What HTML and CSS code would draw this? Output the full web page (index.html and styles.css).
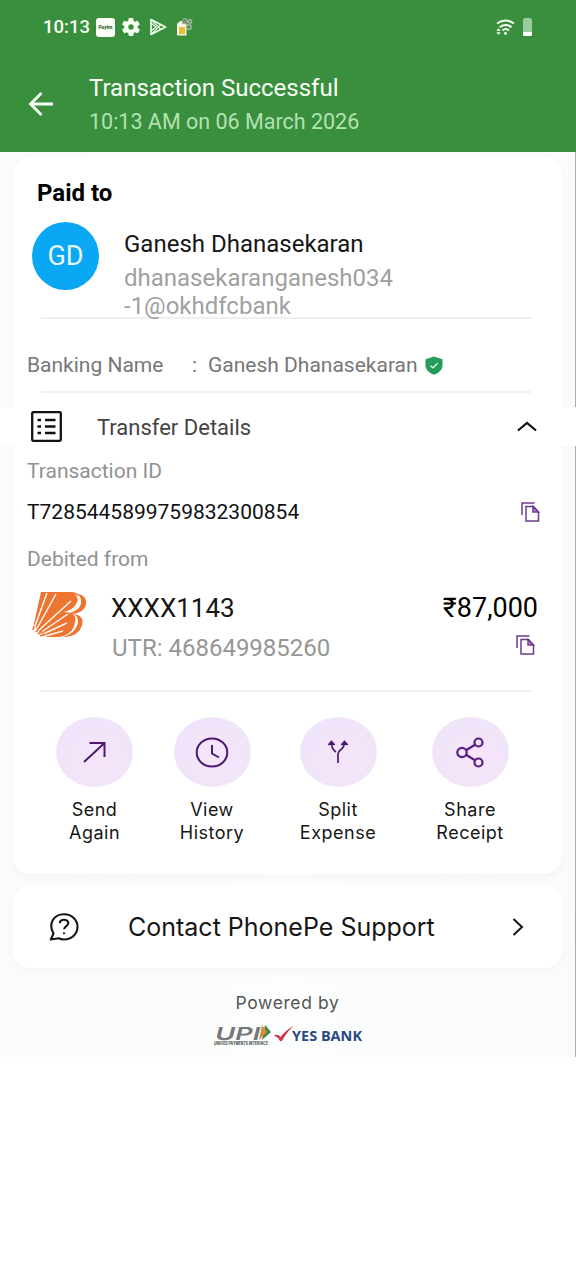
FILE: index.html
```html
<!DOCTYPE html>
<html lang="en">
<head>
<meta charset="utf-8">
<title>Transaction Successful</title>
<link rel="stylesheet" href="styles.css">
</head>
<body>
<header class="header">
  <div class="status">
    <span class="clock">10:13</span>
    <svg class="st-app" width="19" height="19" viewBox="0 0 19 19"><rect width="19" height="19" rx="3" fill="#fbfff8"/><text x="2.5" y="11.4" font-size="5.5" font-weight="900" textLength="14" lengthAdjust="spacingAndGlyphs" fill="#3f6b43">Paytm</text></svg>
    <svg class="st-gear" width="18" height="18" viewBox="2 2 20 20"><path fill="#f6fff2" fill-rule="evenodd" d="M19.4 13c0-.3.1-.6.1-1s0-.7-.1-1l2.1-1.600c.2-.1.2-.4.1-.6l-2-3.500c-.1-.2-.4-.3-.6-.2l-2.500 1c-.5-.4-1.100-.7-1.700-1l-.4-2.600c0-.2-.2-.4-.5-.4h-4c-.2 0-.4.2-.5.4l-.4 2.600c-.6.300-1.200.6-1.700 1l-2.500-1c-.2-.1-.5 0-.6.2l-2 3.500c-.1.2-.1.5.1.6L4.500 11c0 .3-.1.600-.1 1s0 .700.100 1l-2.100 1.600c-.2.200-.2.400-.1.600l2 3.500c.1.200.4.300.6.200l2.500-1c.5.400 1.100.700 1.700 1l.4 2.600c0 .200.200.400.500.400h4c.2 0 .400-.2.500-.4l.4-2.600c.6-.3 1.200-.6 1.700-1l2.500 1c.2.100.5 0 .6-.2l2-3.500c.1-.2.100-.4-.1-.6zM12 15a3 3 0 1 1 0-6 3 3 0 0 1 0 6z"/></svg>
    <svg class="st-play" width="18" height="18" viewBox="0 0 18 18" fill="none" stroke="#efffe9" stroke-width="1.600" stroke-linejoin="round"><path d="M2 1.500v15L16.500 9z"/><path d="M2 1.500l9.800 9.800M2 16.500l9.800-9.800M2 5l5 4-5 4" stroke-width="1.200"/></svg>
    <svg class="st-bag" width="17" height="18" viewBox="0 0 17 18"><path d="M1 17.500V6l3-3h4l2.500 3v11.500z" fill="#f4f3e4"/><path d="M3 9h6v7H3z" fill="#e5bf35"/><g fill="none" stroke="#a8b7a2" stroke-width="1.500"><circle cx="9" cy="3.200" r="2.200"/><circle cx="14" cy="3.500" r="1.700"/><circle cx="12.800" cy="9" r="2.300"/></g><path d="M6 1.500h5v4H6z" fill="#768c77" opacity=".75"/></svg>
    <svg class="st-wifi" width="19" height="17" viewBox="0 0 19 17" fill="none" stroke="#f4fff0" stroke-width="2"><path d="M1 4.500Q9.500-1.500 18 4.500M3.800 8.200Q9.700 3.800 15.500 8.200M6.500 11.500Q9.800 8.500 13 11.500"/><circle cx="9.500" cy="14.300" r="1.500" fill="#f4fff0" stroke="none"/><path d="M.4 12L2.500 9l2.100 3zM.4 13.200h4.200L2.500 16z" fill="#f4fff0" stroke="none"/></svg>
    <svg class="st-batt" width="9" height="18" viewBox="0 0 9 18"><rect width="9" height="18" rx="2.500" fill="#9ccb9d"/><path d="M0 14h9v2.500q0 1.500-1.500 1.500h-6Q0 18 0 16.500z" fill="#fff"/></svg>
  </div>
  <div class="titlebar">
    <svg class="back" width="26" height="26" viewBox="0 0 26 26" fill="none" stroke="#f8fff4" stroke-width="2.800"><path d="M25 13H3M13.500 2L2.500 13l11 11"/></svg>
    <div>
      <h1 class="title">Transaction Successful</h1>
      <p class="date">10:13 AM on 06 March 2026</p>
    </div>
  </div>
</header>

<main class="page">
  <section class="card">
    <h2 class="paid">Paid to</h2>
    <div class="recipient">
      <div class="avatar">GD</div>
      <div>
        <div class="name">Ganesh Dhanasekaran</div>
        <div class="upi">dhanasekaranganesh034<br>-1@okhdfcbank</div>
      </div>
    </div>
    <hr class="rule rule-a">
    <div class="banking">
      <span class="bk-label">Banking Name</span><span class="bk-colon">:</span><span class="bk-name">Ganesh Dhanasekaran</span>
      <svg width="18" height="19" viewBox="0 0 18 19"><path d="M9 .5l8.500 2.800v6c0 4.700-3.600 7.800-8.500 9.400C4.100 17.100.5 14 .5 9.300v-6z" fill="#239c5c"/><path d="M5.500 9.800l2.400 2 4.800-4.600" fill="none" stroke="#e4f8ec" stroke-width="1.300"/></svg>
    </div>
    <hr class="rule rule-b">
    <div class="transfer">
      <svg width="31" height="31" viewBox="0 0 31 31"><rect x="1.200" y="1.200" width="28.600" height="28.600" rx="1" fill="none" stroke="#111" stroke-width="2.300"/><path d="M6.500 9h3.500M14 9h10.500M6.500 15.500h3.500M14 15.500h10.500M6.500 22h3.500M14 22h10.500" stroke="#111" stroke-width="2.500"/></svg>
      <span class="tr-label">Transfer Details</span>
      <svg width="20" height="11" viewBox="0 0 20 11" fill="none" stroke="#111" stroke-width="2.200"><path d="M1 9.500L10 2l9 7.500"/></svg>
    </div>
    <div class="label">Transaction ID</div>
    <div class="txn">
      <span>T7285445899759832300854</span>
      <svg width="19" height="20" viewBox="0 0 19 20" fill="none" stroke="#6d3b8e" stroke-width="1.500"><path d="M1 13V1h12.500"/><path d="M5 4.500h7.500l5 5.500v9H5z"/><path d="M12 4.500V10h5.500z" fill="#b58fcb"/></svg>
    </div>
    <div class="label">Debited from</div>
    <div class="account">
      <svg class="bob" width="56" height="48" viewBox="0 0 56 48">
        <path d="M9 1h30c9 0 10 8 5 13-3 4-7 6-12 7 10-1 14 3 12 10-2 10-10 15-19 15H8C4 46 0 42 1 37z" fill="#ee7431"/>
        <path d="M42 2c8 1 13 4 12 11-1 6-6 9-13 10 8 1 11 5 9 11-2 8-9 12-19 12 9-3 14-9 14-16 0-5-3-7-9-8 8-2 13-6 13-12 0-4-2-7-7-8z" fill="#ee7431"/>
        <path d="M41 3c5 2 6 6 3 10-3 5-7 7-12 8 9 0 13 4 11 10-1 7-5 12-12 14 9-1 15-8 15-15 0-5-4-8-9-8 8-2 12-6 12-11 0-4-3-7-8-8z" fill="#fffaf4"/>
        <path d="M2 38L15 2M4 39L24 3M6 40L39 10M8 42L36 23M9 44L35 32M10 46L31 40M0 32v16h10z" stroke="#fff8ef" stroke-width="1.500" fill="none"/>
        <path d="M0 36l7 4 4 6-2 2H0z" fill="#fff"/>
        <path d="M1 39l1-4M4 41l3-4M6 43l4-3M8 45l5-2" stroke="#ee7431" stroke-width="1.600"/>
      </svg>
      <div class="acc-main">
        <div class="acc-line"><span class="acc-no">XXXX1143</span><span class="amount">₹87,000</span></div>
        <div class="acc-line"><span class="utr">UTR: 468649985260</span>
          <svg class="copy2" width="19" height="20" viewBox="0 0 19 20" fill="none" stroke="#6d3b8e" stroke-width="1.500"><path d="M1 13V1h12.500"/><path d="M5 4.500h7.500l5 5.500v9H5z"/><path d="M12 4.500V10h5.500z" fill="#b58fcb"/></svg>
        </div>
      </div>
    </div>
    <hr class="rule rule-c">
    <div class="actions">
      <div class="action"><span class="disc"><svg width="26" height="24" viewBox="0 0 26 24" fill="none" stroke="#4c1a72" stroke-width="2"><path d="M2 22L22.500 3M7.500 3h15v14"/></svg></span>Send<br>Again</div>
      <div class="action"><span class="disc"><svg width="34" height="31" viewBox="0 0 34 31" fill="none" stroke="#4c1a72" stroke-width="2"><ellipse cx="17" cy="15.500" rx="15.300" ry="14"/><path d="M17 8v8.500l7 4"/></svg></span>View<br>History</div>
      <div class="action"><span class="disc"><svg width="22" height="24" viewBox="0 0 22 24" fill="none" stroke="#4c1a72" stroke-width="1.700"><path d="M11 23v-9c0-2 1-3 3-4.500 2.500-2 3.500-3.500 3.500-7.500M4.500 3c0 4 1 6.500 4.500 9"/><path d="M14.300 5l3.200-3.500L20.700 5M1.300 5l3.200-3.500L7.700 5" fill="#4c1a72"/></svg></span>Split<br>Expense</div>
      <div class="action"><span class="disc"><svg width="28" height="31" viewBox="0 0 28 31" fill="none" stroke="#5a1d80" stroke-width="2.200"><circle cx="6" cy="15.500" r="4.700"/><circle cx="22.500" cy="5.500" r="4"/><circle cx="22.500" cy="25.500" r="4"/><path d="M10 13.300l9-5.500M10 17.700l9 5.500"/></svg></span>Share<br>Receipt</div>
    </div>
  </section>

  <section class="support">
    <svg width="30" height="28" viewBox="0 0 30 28" fill="none" stroke="#161616" stroke-width="2.100" stroke-linejoin="round"><path d="M4.500 20.500C-1 11 4.500 1.300 15 1.300c8 0 13.500 5.500 13.500 12.500S23 26.500 15 26.500c-2.500 0-4-.5-5.500-1.200L1.800 26.500z"/><path d="M10.800 10.200C10.500 5.600 19.500 5.600 19.300 10.200c-.1 2.800-4 3-4.200 6"/><circle cx="15" cy="20.300" r=".7" fill="#161616" stroke-width="1"/></svg>
    <span class="sup-text">Contact PhonePe Support</span>
    <svg width="12" height="18" viewBox="0 0 12 18" fill="none" stroke="#161616" stroke-width="2"><path d="M1.500 1L10 9l-8.500 8"/></svg>
  </section>

  <footer class="footer">
    <div class="powered">Powered by</div>
    <svg width="150" height="22" viewBox="0 0 150 22">
      <g class="upi-mark" transform="translate(1 15.500) skewX(-14)"><text x="0" y="0" font-size="18" font-weight="600" textLength="45" lengthAdjust="spacingAndGlyphs" fill="#77787b">UPI</text></g>
      <path d="M52 1l6 7-9 8z" fill="#3e8750"/><path d="M49 1l5 7-8 8z" fill="#df8b36"/>
      <text class="upi-tag" x="1" y="20.500" font-size="4.300" font-weight="700" textLength="54" lengthAdjust="spacingAndGlyphs" fill="#444">UNIFIED PAYMENTS INTERFACE</text>
      <path d="M61 11.500q4-2 6.500 1.500Q73 6 80.500 2 73 9 69 17h-2q-2-4-6-5.500z" fill="#cf3350"/>
      <text class="yes" x="79" y="17" font-size="14" font-weight="700" textLength="70" lengthAdjust="spacingAndGlyphs" fill="#2b4784">YES BANK</text>
    </svg>
  </footer>
</main>
</body>
</html>
```
FILE: styles.css
```css
* { box-sizing: border-box; }
body { margin: 0; width: 576px; min-height: 1280px; background: #fff; font-family: Roboto, "Liberation Sans", sans-serif; color: #161616; }
h1, h2, p, hr { margin: 0; border: 0; font-weight: 400; }
svg { display: block; flex: none; }
span, .title, .date, .name, .upi { white-space: nowrap; }

.header { height: 152px; background: #398f3e; color: #f8fff4; display: flex; flex-direction: column; }
.status { height: 54px; padding-left: 43px; display: flex; align-items: center; }
.clock { width: 53px; font-size: 18.5px; font-weight: 500; }
.st-gear { margin-left: 7px; }
.st-play { margin-left: 9px; }
.st-bag { margin-left: 9px; }
.st-wifi { margin-left: 303px; }
.st-batt { margin-left: 8px; }
.titlebar { display: flex; padding: 17px 0 0 28px; }
.back { margin: 20px 35px 0 0; }
.title { font-size: 24px; line-height: 34px; }
.date { font-size: 21.500px; line-height: 34px; color: #b3e2b1; }

.page { padding-top: 5px; height: 905px; background: linear-gradient(90deg, #f9fcfb, #fcfefd 50%, #fafcfb); border-right: 1px solid #aaadac; }
.card { width: 549px; height: 717px; margin-left: 13px; padding-top: 21px; background: #fff; border-radius: 18px; box-shadow: 0 3px 9px rgba(0,0,0,.035); }
.paid { margin-left: 24px; font-size: 24px; font-weight: 700; line-height: 30px; color: #000; }
.recipient { display: flex; margin: 14px 0 0 19px; }
.avatar { width: 67px; height: 68px; margin-right: 25px; border-radius: 50%; background: #0aa7f4; color: #e9f8ff; font-size: 27px; line-height: 69px; text-align: center; }
.name { margin-top: 7px; font-size: 24px; line-height: 30px; }
.upi { margin-top: 5px; font-size: 24px; line-height: 28px; color: #a0a0a0; }
.rule { width: 490px; height: 2px; margin-left: 28px; background: #efefef; }
.rule-a { margin-top: -3px; }
.banking { height: 52px; margin: 20px 0 0 14px; display: flex; align-items: center; font-size: 21px; color: #777; }
.bk-label { width: 165px; }
.bk-colon { width: 16px; }
.bk-name { width: 217px; }
.transfer { width: 576px; height: 39px; margin: 14px 0 0 -13px; padding-left: 31px; background: #fff; display: flex; align-items: center; font-size: 22px; color: #444; position: relative; }
.tr-label { width: 420px; margin-left: 35px; padding-top: 2px; }
.label { height: 44px; line-height: 50px; margin-left: 14px; font-size: 21px; color: #929292; }
.txn { height: 44px; margin-left: 14px; padding-right: 22px; display: flex; justify-content: space-between; align-items: center; font-size: 21px; color: #111; }
.account { display: flex; height: 112px; padding-top: 10px; }
.bob { margin: 3px 0 0 19px; }
.acc-main { width: 427px; margin-left: 23px; }
.acc-line { height: 40px; line-height: 40px; display: flex; justify-content: space-between; }
.acc-no { font-size: 26px; }
.amount { font-size: 27px; color: #000; }
.utr { font-size: 24px; color: #969696; margin-left: 1px; }
.copy2 { margin: 7px 3px 0 0; }
.actions { margin: 25px 0 0 32px; display: grid; grid-template-columns: 99px 136px 116px 148px; }
.action { font-family: Inter, sans-serif; font-size: 18px; line-height: 23px; letter-spacing: .5px; text-align: center; display: block; }
.disc { width: 77px; height: 70px; margin: 0 auto 11px; border-radius: 50%; background: radial-gradient(circle at 55% 60%, #f6e5f9, #ece4fa); display: flex; align-items: center; justify-content: center; }
.support { width: 549px; height: 83px; margin: 11px 0 0 13px; padding: 0 38px 0 36px; background: #fff; border-radius: 18px; box-shadow: 0 3px 12px rgba(0,0,0,.03); display: flex; align-items: center; font-family: Inter, sans-serif; }
.sup-text { font-size: 25px; margin: 0 auto 0 49px; }
.footer { padding-top: 23px; display: flex; flex-direction: column; align-items: center; font-family: Inter, sans-serif; }
.powered { height: 33px; font-size: 17.500px; line-height: 24px; letter-spacing: .6px; color: #555; }
.upi-mark text { font-family: Inter, sans-serif; }
.yes { font-family: "Open Sans", "Noto Sans", sans-serif; }
```
